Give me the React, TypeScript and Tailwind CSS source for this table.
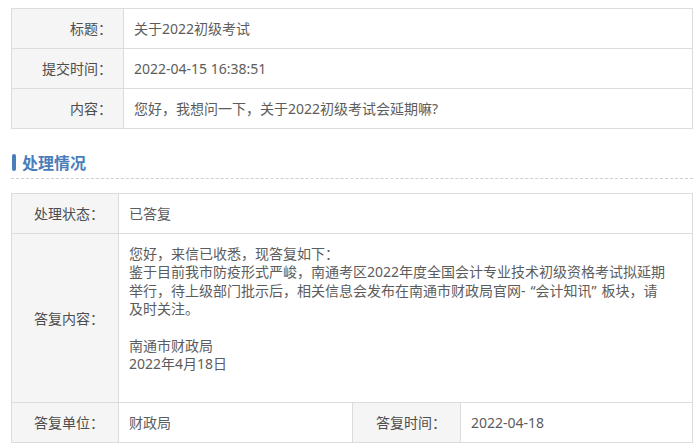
import React from "react";

const font = {
  fontFamily: '"Noto Sans", "Noto Sans CJK SC", sans-serif',
};

const askRows = [
  { label: "标题：", value: "关于2022初级考试" },
  { label: "提交时间：", value: "2022-04-15 16:38:51" },
  { label: "内容：", value: "您好，我想问一下，关于2022初级考试会延期嘛?" },
];

export default function App() {
  return (
    <div className="min-h-[447px] bg-white text-[14px]" style={font}>
      <div className="ml-[11px] w-[682px] pt-[8px]">
        {/* Question */}
        <table className="w-full border-collapse table-fixed">
          <colgroup>
            <col className="w-[112px]" />
            <col />
          </colgroup>
          <tbody>
            {askRows.map((row) => (
              <tr key={row.label} className="h-[40px]">
                <td className="border border-[#dcdcdc] bg-[#f5f5f5] pr-[11px] text-right text-[#4d4d4d]">
                  {row.label}
                </td>
                <td className="border border-[#dcdcdc] pl-[10px] text-[#5c5c5c]">
                  {row.value}
                </td>
              </tr>
            ))}
          </tbody>
        </table>

        {/* Section header */}
        <div className="pt-[22px] pb-[5px] border-b border-dashed border-[#cfcfcf]">
          <div className="flex items-center h-[22px]">
            <span className="ml-[1px] w-[4px] h-[17px] rounded-[2px] bg-[#4a7dbb]" />
            <span className="ml-[6px] text-[16px] font-bold text-[#4a7dbb] [font-family:'Noto_Sans_CJK_SC',sans-serif]">
              处理情况
            </span>
          </div>
        </div>

        {/* Reply */}
        <table className="mt-[14px] w-full border-collapse table-fixed">
          <colgroup>
            <col className="w-[107px]" />
            <col className="w-[234px]" />
            <col className="w-[108px]" />
            <col />
          </colgroup>
          <tbody>
            <tr className="h-[40px]">
              <td className="border border-[#dcdcdc] bg-[#f5f5f5] pr-[14px] text-right text-[#4d4d4d]">
                处理状态：
              </td>
              <td colSpan={3} className="border border-[#dcdcdc] pl-[10px] text-[#5c5c5c]">
                已答复
              </td>
            </tr>
            <tr className="h-[169px]">
              <td className="border border-[#dcdcdc] bg-[#f5f5f5] pr-[14px] text-right text-[#4d4d4d]">
                答复内容：
              </td>
              <td
                colSpan={3}
                className="border border-[#dcdcdc] pl-[10px] pr-[8px] pt-[11px] pb-[27px] align-top leading-[18.4px] text-[#5c5c5c]"
              >
                您好，来信已收悉，现答复如下：
                <br />
                鉴于目前我市防疫形式严峻，南通考区2022年度全国会计专业技术初级资格考试拟延期
                <br />
                举行，待上级部门批示后，相关信息会发布在南通市财政局官网-
                <span className="ml-[5px]">“</span>会计知讯<span className="mr-[5px]">”</span>
                板块，请
                <br />
                及时关注。
                <br />
                <br />
                南通市财政局
                <br />
                2022年4月18日
              </td>
            </tr>
            <tr className="h-[40px]">
              <td className="border border-[#dcdcdc] bg-[#f5f5f5] pr-[14px] text-right text-[#4d4d4d]">
                答复单位：
              </td>
              <td className="border border-[#dcdcdc] pl-[10px] text-[#5c5c5c]">财政局</td>
              <td className="border border-[#dcdcdc] bg-[#f5f5f5] pr-[14px] text-right text-[#4d4d4d]">
                答复时间：
              </td>
              <td className="border border-[#dcdcdc] pl-[10px] text-[#5c5c5c]">2022-04-18</td>
            </tr>
          </tbody>
        </table>
      </div>
    </div>
  );
}
